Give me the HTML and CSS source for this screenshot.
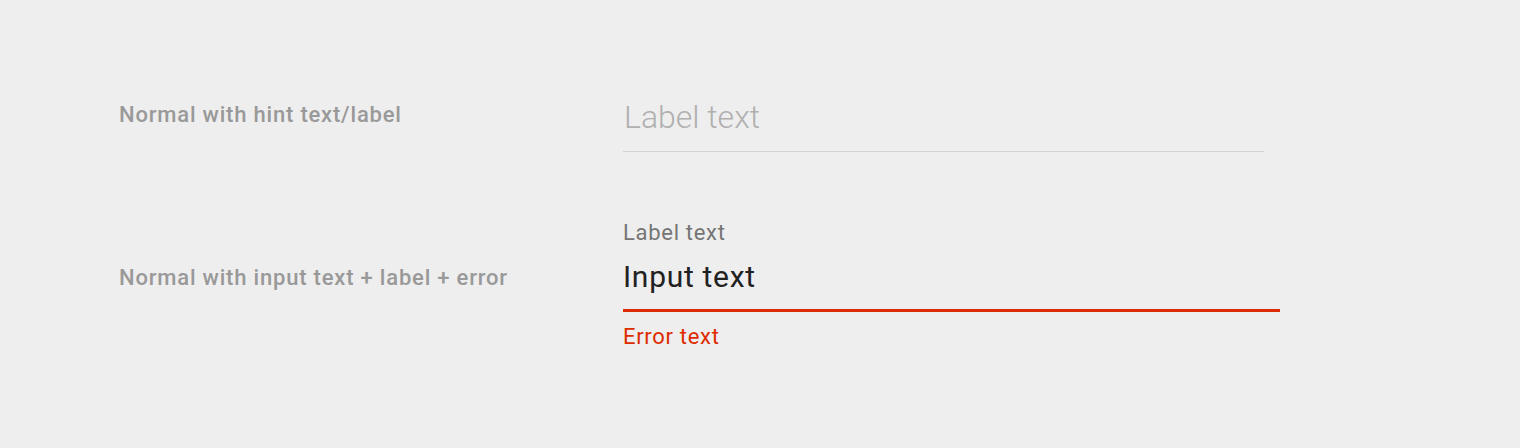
FILE: index.html
```html
<html>
<head>
	<title>Text fields</title>
	<meta http-equiv="Content-Type" content="text/html; charset=utf-8" />
	<link rel="stylesheet" href="styles.css">
</head>
<body>

<div class="sheet">

	<div class="row first">
		<div class="caption">Normal with hint text/label</div>
		<div class="field hint">
			<div class="hint-text">Label text</div>
		</div>
	</div>

	<div class="row second">
		<div class="caption">Normal with input text + label + error</div>
		<div class="field error">
			<div class="label">Label text</div>
			<div class="input">Input text</div>
		</div>
	</div>
	<div class="row">
		<div class="caption"></div>
		<div class="error-text">Error text</div>
	</div>

</div>

</body>
</html>
```

FILE: styles.css
```css
body {
	margin: 0;
	background-color: #eeeeee;
	font-family: Roboto, "Noto Sans", sans-serif;
}

.sheet {
	padding-top: 97px;
	padding-left: 119px;
}

.row {
	display: flex;
	align-items: flex-start;
}

.caption {
	width: 504px;
	font-size: 22px;
	line-height: 24px;
	letter-spacing: 0.8px;
	font-weight: 500;
	color: #999999;
}

.first .caption {
	margin-top: 6px;
}

.second {
	margin-top: 69px;
}

.second .caption {
	margin-top: 45px;
}

.hint {
	width: 641px;
	padding-bottom: 14px;
	border-bottom: 1px solid #d3d3d3;
}

.hint-text {
	padding-left: 1px;
	font-size: 32px;
	line-height: 40px;
	font-weight: 300;
	color: #b0b0b0;
}

.error {
	width: 657px;
	padding-bottom: 14px;
	border-bottom: 3px solid #dd2c00;
}

.label {
	font-size: 22px;
	line-height: 24px;
	letter-spacing: 0.7px;
	color: #757575;
}

.input {
	margin-top: 14px;
	font-size: 30px;
	line-height: 36px;
	letter-spacing: 0.7px;
	color: #212121;
}

.error-text {
	margin-top: 13px;
	font-size: 22px;
	line-height: 24px;
	letter-spacing: 0.7px;
	color: #dd2c00;
}
```
